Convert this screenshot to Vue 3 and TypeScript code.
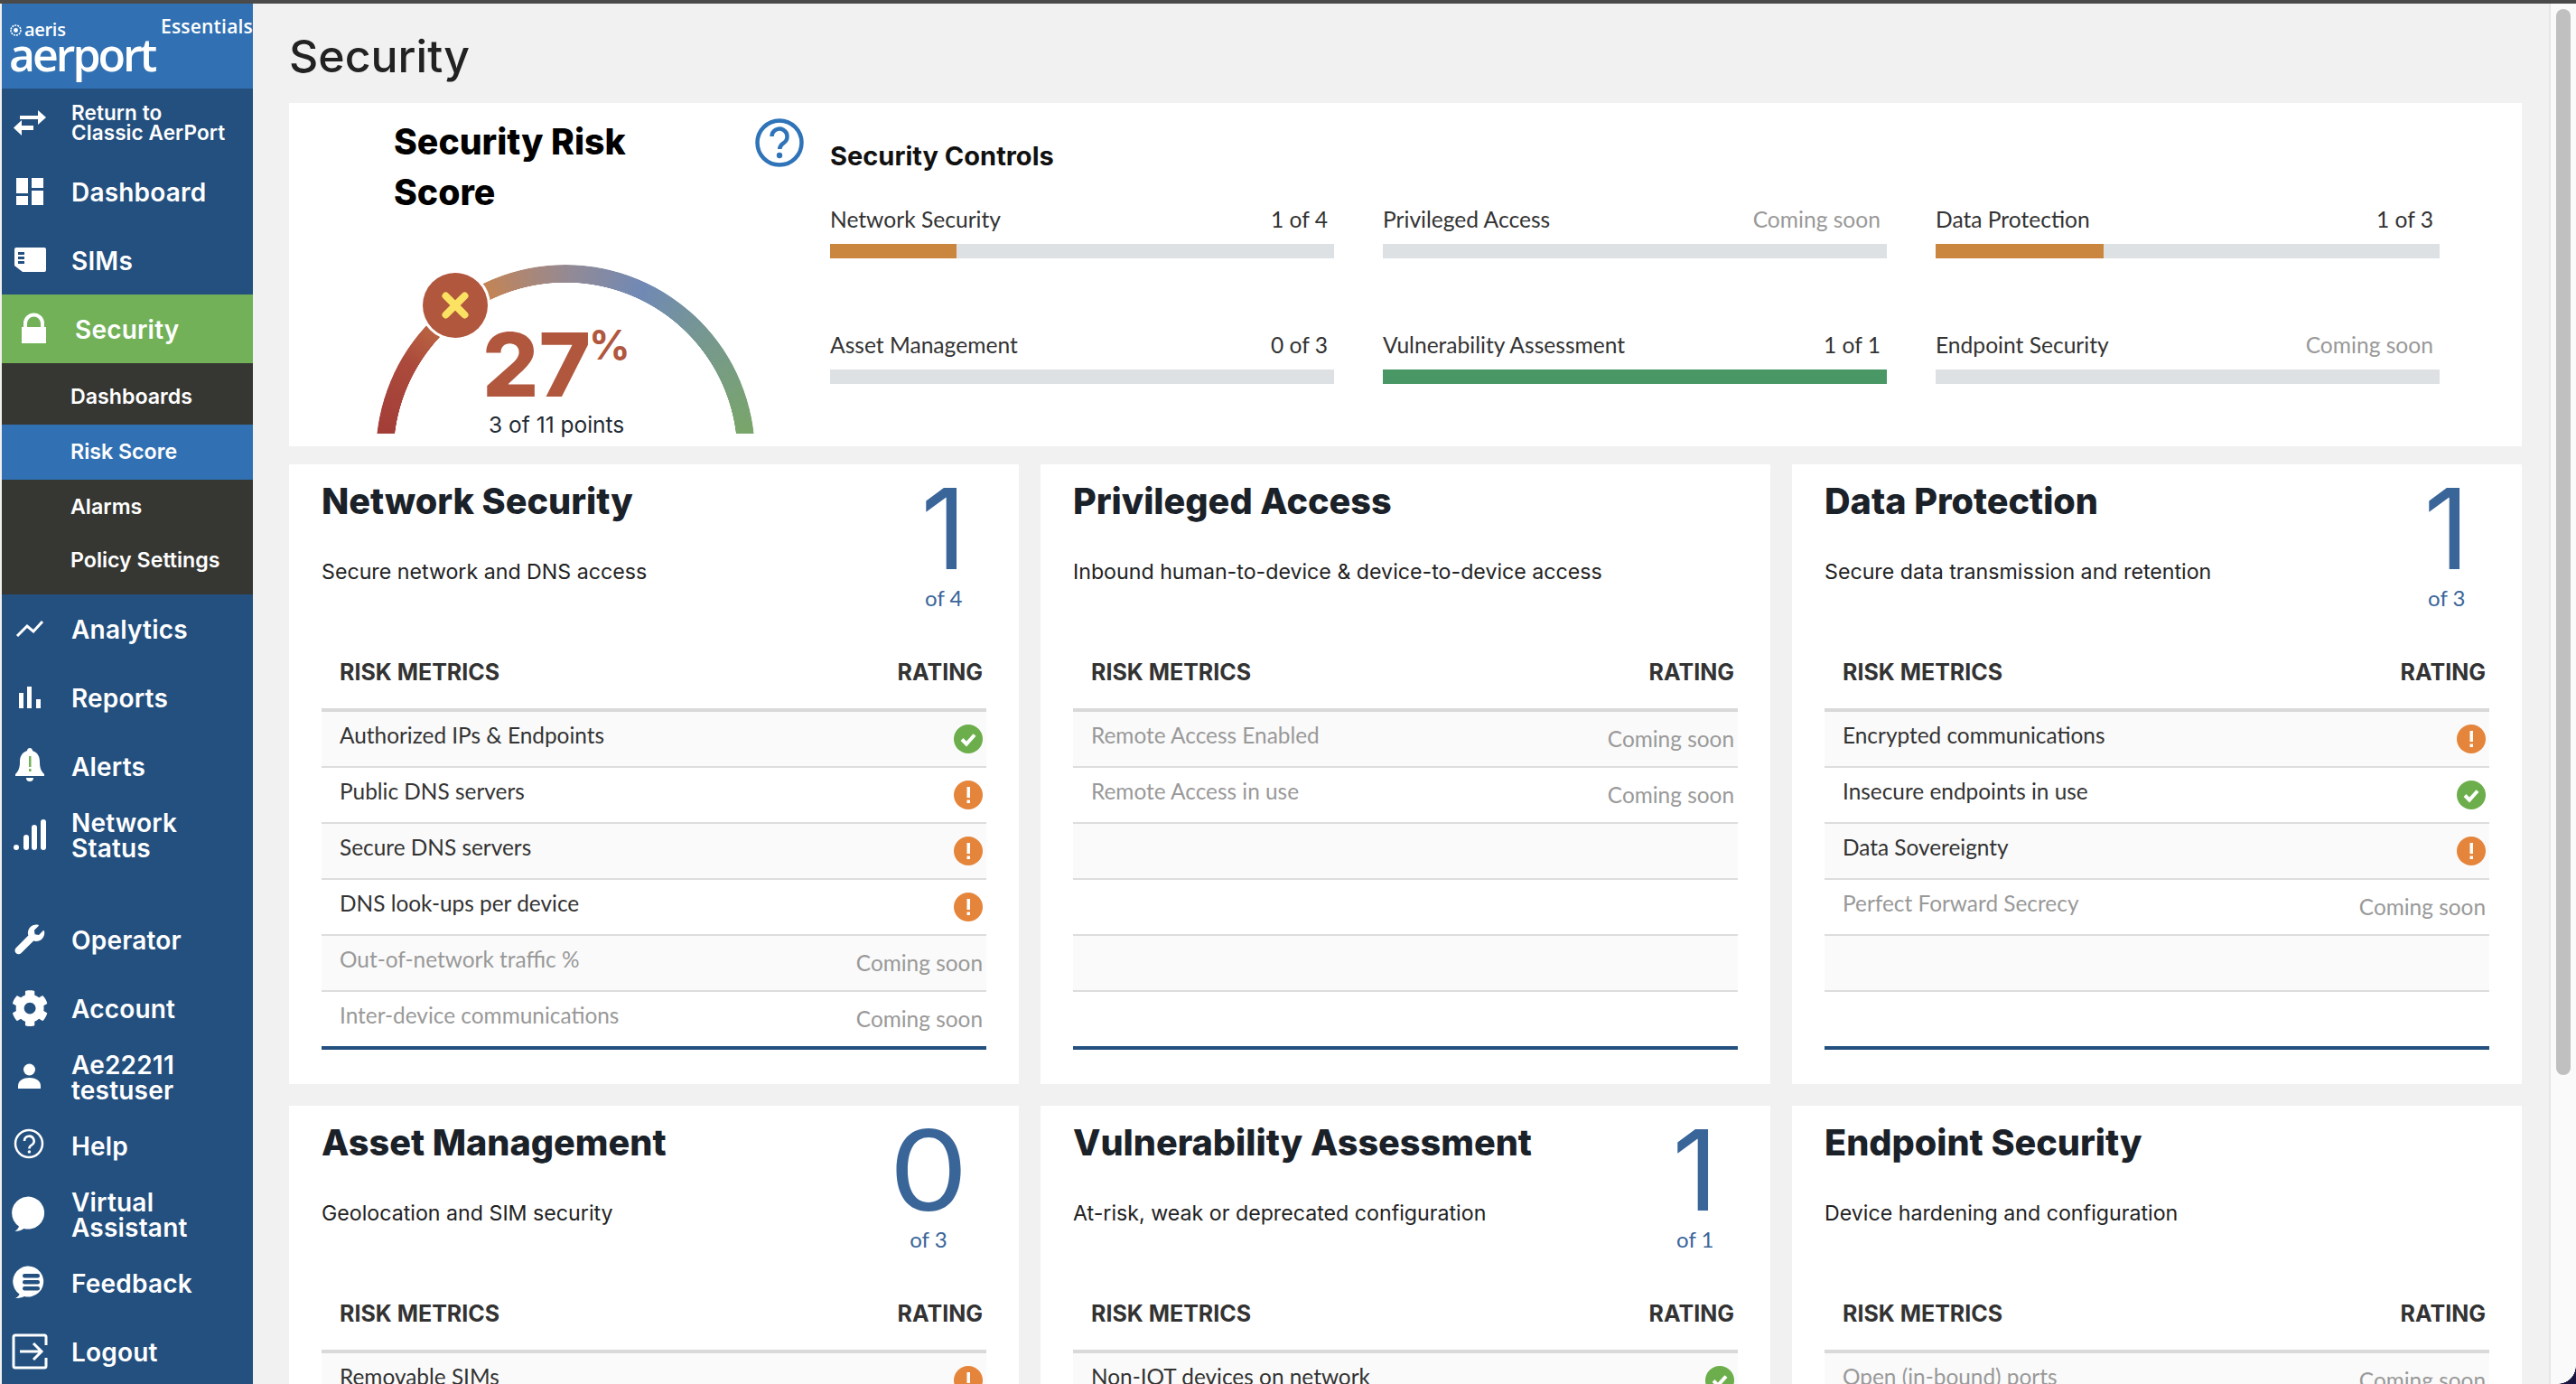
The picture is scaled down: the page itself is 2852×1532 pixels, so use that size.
<script setup lang="ts">
interface Nav { lines: string[]; icon: string; kind?: string }
const navTop: Nav[] = [
  { lines: ['Return to', 'Classic AerPort'], icon: 'swap', kind: 'small' },
  { lines: ['Dashboard'], icon: 'dash' },
  { lines: ['SIMs'], icon: 'sim' },
  { lines: ['Security'], icon: 'lock', kind: 'active' },
]
const subs = [
  { label: 'Dashboards', h: 68, shift: 6 },
  { label: 'Risk Score', h: 61, shift: -3 },
  { label: 'Alarms', h: 61, shift: -3 },
  { label: 'Policy Settings', h: 66, shift: -10 },
]
const navMid: Nav[] = [
  { lines: ['Analytics'], icon: 'trend' },
  { lines: ['Reports'], icon: 'bars' },
  { lines: ['Alerts'], icon: 'bell' },
  { lines: ['Network', 'Status'], icon: 'signal' },
]
const navLow: Nav[] = [
  { lines: ['Operator'], icon: 'wrench' },
  { lines: ['Account'], icon: 'gear' },
  { lines: ['Ae22211', 'testuser'], icon: 'user' },
  { lines: ['Help'], icon: 'help' },
  { lines: ['Virtual', 'Assistant'], icon: 'chat' },
  { lines: ['Feedback'], icon: 'feedback' },
  { lines: ['Logout'], icon: 'logout' },
]
const controls = [
  { name: 'Network Security', value: '1 of 4', pct: 25, color: '#ca853f' },
  { name: 'Privileged Access', value: 'Coming soon', pct: 0, color: '', soon: true },
  { name: 'Data Protection', value: '1 of 3', pct: 33.3, color: '#ca853f' },
  { name: 'Asset Management', value: '0 of 3', pct: 0, color: '' },
  { name: 'Vulnerability Assessment', value: '1 of 1', pct: 100, color: '#4a9766' },
  { name: 'Endpoint Security', value: 'Coming soon', pct: 0, color: '', soon: true },
]
type Status = 'ok' | 'warn' | 'soon'
interface Row { label: string; status: Status }
interface Card { title: string; sub: string; num?: string; of?: string; rows: Row[] }
const cards: Card[] = [
  { title: 'Network Security', sub: 'Secure network and DNS access', num: '1', of: 'of 4', rows: [
    { label: 'Authorized IPs & Endpoints', status: 'ok' },
    { label: 'Public DNS servers', status: 'warn' },
    { label: 'Secure DNS servers', status: 'warn' },
    { label: 'DNS look-ups per device', status: 'warn' },
    { label: 'Out-of-network traffic %', status: 'soon' },
    { label: 'Inter-device communications', status: 'soon' },
  ] },
  { title: 'Privileged Access', sub: 'Inbound human-to-device & device-to-device access', rows: [
    { label: 'Remote Access Enabled', status: 'soon' },
    { label: 'Remote Access in use', status: 'soon' },
  ] },
  { title: 'Data Protection', sub: 'Secure data transmission and retention', num: '1', of: 'of 3', rows: [
    { label: 'Encrypted communications', status: 'warn' },
    { label: 'Insecure endpoints in use', status: 'ok' },
    { label: 'Data Sovereignty', status: 'warn' },
    { label: 'Perfect Forward Secrecy', status: 'soon' },
  ] },
  { title: 'Asset Management', sub: 'Geolocation and SIM security', num: '0', of: 'of 3', rows: [
    { label: 'Removable SIMs', status: 'warn' },
  ] },
  { title: 'Vulnerability Assessment', sub: 'At-risk, weak or deprecated configuration', num: '1', of: 'of 1', rows: [
    { label: 'Non-IOT devices on network', status: 'ok' },
  ] },
  { title: 'Endpoint Security', sub: 'Device hardening and configuration', rows: [
    { label: 'Open (in-bound) ports', status: 'soon' },
  ] },
]
const fillers = (c: Card) => Math.max(0, 6 - c.rows.length)
const wrench = 'M507.73 109.1c-2.24-9.03-13.54-12.09-20.12-5.51l-74.36 74.36-67.88-11.31-11.31-67.88 74.36-74.36c6.62-6.62 3.43-17.9-5.66-20.16-47.38-11.74-99.55.91-136.58 37.93-39.64 39.64-50.55 97.1-34.05 147.2L18.74 402.76c-24.99 24.99-24.99 65.51 0 90.5 24.99 24.99 65.51 24.99 90.5 0l213.21-213.21c50.12 16.71 107.47 5.68 147.37-34.22 37.07-37.07 49.7-89.32 37.91-136.73z'
const gear = 'M487.4 315.7l-42.6-24.6c4.3-23.2 4.3-47 0-70.2l42.6-24.6c4.9-2.8 7.1-8.6 5.5-14-11.1-35.6-30-67.8-54.7-94.6-3.8-4.1-10-5.1-14.8-2.3L380.8 110c-17.9-15.4-38.5-27.3-60.8-35.1V25.8c0-5.6-3.9-10.5-9.4-11.7-36.7-8.2-74.3-7.8-109.2 0-5.5 1.2-9.4 6.1-9.4 11.7V75c-22.2 7.9-42.8 19.8-60.8 35.1L88.7 85.5c-4.9-2.8-11-1.9-14.8 2.3-24.7 26.7-43.6 58.9-54.7 94.6-1.7 5.4.6 11.2 5.5 14L67.3 221c-4.3 23.2-4.3 47 0 70.2l-42.6 24.6c-4.9 2.8-7.1 8.6-5.5 14 11.1 35.6 30 67.8 54.7 94.6 3.8 4.1 10 5.1 14.8 2.3l42.6-24.6c17.9 15.4 38.5 27.3 60.8 35.1v49.2c0 5.6 3.9 10.5 9.4 11.7 36.7 8.2 74.3 7.8 109.2 0 5.5-1.2 9.4-6.1 9.4-11.7v-49.2c22.2-7.9 42.8-19.8 60.8-35.1l42.6 24.6c4.9 2.8 11 1.9 14.8-2.3 24.7-26.7 43.6-58.9 54.7-94.6 1.5-5.5-.7-11.3-5.6-14.1zM256 336c-44.1 0-80-35.9-80-80s35.9-80 80-80 80 35.9 80 80-35.9 80-80 80z'
</script>

<template>
  <div class="root">
    <div class="topbar"></div>
    <div class="body">
      <aside class="side">
        <div class="logo">
          <div class="logo-stack">
            <div class="aeris">
              <svg width="13" height="13" viewBox="0 0 13 13"><circle cx="6.5" cy="6.5" r="5.5" fill="none" stroke="#fff" stroke-width="1.6" stroke-dasharray="2 1"/><circle cx="6.5" cy="6.5" r="2.4" fill="#fff"/></svg>
              <span>aeris</span>
            </div>
            <div class="aerport">aerport</div>
          </div>
          <div class="essentials">Essentials</div>
        </div>
        <div class="nav-group">
          <template v-for="n in navTop" :key="n.icon">
            <div class="nav" :class="n.kind">
              <span class="nav-ic"><svg width="40" height="40" viewBox="0 0 40 40" fill="#fff">
                <g v-if="n.icon==='swap'"><rect x="9" y="12" width="20" height="4"/><path d="M29 6l9 8-9 8z"/><rect x="11" y="23" width="13" height="5"/><path d="M11 17l-9 8.500 9 8.500z"/></g>
                <g v-else-if="n.icon==='dash'"><rect x="5" y="5" width="13" height="17"/><rect x="22" y="5" width="13" height="11"/><rect x="5" y="25" width="13" height="10"/><rect x="22" y="19" width="13" height="16"/></g>
                <g v-else-if="n.icon==='sim'"><path d="M3 8q0-2 2-2h31q2 0 2 2v23q0 2-2 2H12l-9-7z"/><path d="M7 11h7v3H7zM7 16h7v3H7zM7 21h7v3H7z" fill="#23507f"/></g>
                <g v-else-if="n.icon==='lock'"><rect x="7" y="18" width="27" height="18"/><path d="M11 19v-5a9.500 9.500 0 0 1 19 0v5" fill="none" stroke="#fff" stroke-width="4"/></g>
              </svg></span>
              <span class="nav-text"><span v-for="l in n.lines" :key="l">{{ l }}</span></span>
            </div>
          </template>
        </div>
        <div class="subs">
          <div v-for="s in subs" :key="s.label" class="sub" :class="{ on: s.label === 'Risk Score' }" :style="{ height: s.h + 'px' }"><span :style="{ transform: 'translateY(' + s.shift / 2 + 'px)' }">{{ s.label }}</span></div>
        </div>
        <div class="nav-group">
          <div v-for="n in navMid" :key="n.icon" class="nav">
            <span class="nav-ic"><svg width="40" height="40" viewBox="0 0 40 40" fill="#fff">
              <polyline v-if="n.icon==='trend'" points="6,28 17,17 24,23 34,12" fill="none" stroke="#fff" stroke-width="3"/>
              <g v-else-if="n.icon==='bars'"><rect x="8" y="15" width="5" height="17"/><rect x="17" y="8" width="5" height="24"/><rect x="27" y="22" width="5" height="10"/></g>
              <g v-else-if="n.icon==='bell'"><path d="M20 0c2 0 3 1.500 3 3 6 2 8 7 8 12 0 6 1 10 5 14v2H4v-2c4-4 5-8 5-14 0-5 2-10 8-12 0-1.500 1-3 3-3z"/><path d="M16 33h8a4 4 0 0 1-8 0z"/><path d="M19 9h2.500v12H19zM19 23h2.500v3H19z" fill="#72b158"/></g>
              <g v-else-if="n.icon==='signal'"><rect x="2" y="31" width="6" height="6" rx="3"/><rect x="13" y="20" width="6" height="17" rx="3"/><rect x="22" y="9" width="6" height="28" rx="3"/><rect x="32" y="3" width="6" height="34" rx="3"/></g>
            </svg></span>
            <span class="nav-text"><span v-for="l in n.lines" :key="l">{{ l }}</span></span>
          </div>
        </div>
        <div class="nav-gap"></div>
        <div class="nav-group">
          <div v-for="n in navLow" :key="n.icon" class="nav">
            <span class="nav-ic"><svg width="40" height="40" viewBox="0 0 40 40" fill="#fff">
              <path v-if="n.icon==='wrench'" :d="wrench" transform="translate(3.500 3.500) scale(0.064)"/>
              <path v-else-if="n.icon==='gear'" :d="gear" transform="translate(-0.500 -0.500) scale(0.0805)"/>
              <g v-else-if="n.icon==='user'"><circle cx="19.500" cy="12" r="6.500"/><path d="M7 33v-3c0-6 6-9 12.500-9s12.500 3 12.500 9v3z"/></g>
              <g v-else-if="n.icon==='help'"><circle cx="19" cy="18" r="15" fill="none" stroke="#fff" stroke-width="2.500"/><path d="M14 15a5.300 5.300 0 1 1 8 4.500c-2 1.200-2.600 2-2.600 4" fill="none" stroke="#fff" stroke-width="2.600"/><circle cx="19.400" cy="27" r="1.800"/></g>
              <path v-else-if="n.icon==='chat'" d="M3 39c3-2 4-4 4.500-5.500A18 18 0 1 1 13 36c-3 2-6 3-10 3z" transform="translate(0.500 0)"/>
              <g v-else-if="n.icon==='feedback'"><path d="M4 37c3-1.500 4-3 4.500-4.500A17 17 0 1 1 14 35c-3 1.500-6 2-10 2z"/><rect x="12" y="10" width="19" height="4.500" rx="2.200" fill="#23507f"/><rect x="12" y="17" width="19" height="4.500" rx="2.200" fill="#23507f"/><rect x="12" y="24" width="19" height="4.500" rx="2.200" fill="#23507f"/></g>
              <g v-else-if="n.icon==='logout'"><path d="M38 13V4q0-2-2-2H4q-2 0-2 2v32q0 2 2 2h32q2 0 2-2v-9" fill="none" stroke="#fff" stroke-width="3"/><path d="M9 20h23M24 11l9 9-9 9" fill="none" stroke="#fff" stroke-width="3"/></g>
            </svg></span>
            <span class="nav-text"><span v-for="l in n.lines" :key="l">{{ l }}</span></span>
          </div>
        </div>
      </aside>

      <main class="main">
        <h1 class="page-title">Security</h1>
        <section class="panel">
          <div class="score">
            <div class="score-head">
              <h2 class="score-title">Security Risk Score</h2>
              <svg class="score-help" width="54" height="54" viewBox="0 0 54 54"><circle cx="27" cy="27" r="24.500" fill="none" stroke="#2f74b8" stroke-width="4.500"/><path d="M18.500 20a8.500 8.500 0 1 1 13 7.300c-3.200 2-4.300 3.500-4.300 6.700" fill="none" stroke="#2f74b8" stroke-width="4.500"/><circle cx="27" cy="41" r="3.200" fill="#2f74b8"/></svg>
            </div>
            <div class="gauge">
              <div class="arc-clip"><div class="arc"></div></div>
              <div class="marker">
                <svg width="72" height="72" viewBox="0 0 72 72"><circle cx="36" cy="36" r="36" fill="#b0573e"/><path d="M25.500 25.500l21 21M46.500 25.500l-21 21" stroke="#fce262" stroke-width="8" stroke-linecap="round"/></svg>
              </div>
              <div class="pct"><span class="pct-num">27</span><span class="pct-sign">%</span></div>
              <div class="points">3 of 11 points</div>
            </div>
          </div>
          <div class="controls">
            <h3 class="controls-title">Security Controls</h3>
            <div class="controls-grid">
              <div v-for="c in controls" :key="c.name" class="ctl">
                <div class="ctl-label"><span>{{ c.name }}</span><span :class="{ soon: c.soon }">{{ c.value }}</span></div>
                <div class="track"><div class="fill" :style="{ width: c.pct + '%', background: c.color }"></div></div>
              </div>
            </div>
          </div>
        </section>

        <section class="cards">
          <article v-for="c in cards" :key="c.title" class="card">
            <div class="card-head">
              <div>
                <h2 class="card-title">{{ c.title }}</h2>
                <p class="card-sub">{{ c.sub }}</p>
              </div>
              <div v-if="c.num" class="count" :class="{ zero: c.num === '0' }">
                <div class="count-num">{{ c.num }}</div>
                <div class="count-of">{{ c.of }}</div>
              </div>
            </div>
            <div class="thead"><span>RISK METRICS</span><span>RATING</span></div>
            <div class="tbody">
              <div v-for="r in c.rows" :key="r.label" class="row">
                <span class="row-label" :class="{ soon: r.status === 'soon' }">{{ r.label }}</span>
                <span v-if="r.status === 'soon'" class="soon">Coming soon</span>
                <svg v-else-if="r.status === 'ok'" class="st" width="32" height="32" viewBox="0 0 32 32"><circle cx="16" cy="16" r="16" fill="#6cae4b"/><path d="M9 16.500l5 5 9-10" fill="none" stroke="#fff" stroke-width="4"/></svg>
                <svg v-else class="st" width="32" height="32" viewBox="0 0 32 32"><circle cx="16" cy="16" r="16" fill="#e5853b"/><rect x="14.500" y="7" width="3.500" height="12" fill="#fff"/><rect x="14.500" y="21.500" width="3.500" height="3.500" fill="#fff"/></svg>
              </div>
              <div v-for="i in fillers(c)" :key="i" class="row"></div>
            </div>
          </article>
        </section>
      </main>

      <div class="scrollbar"><div class="thumb"></div></div>
    </div>
    <div class="corner"></div>
  </div>
</template>

<style>
html, body { margin: 0; padding: 0; overflow: hidden; }
</style>

<style scoped>
.root { position: relative; width: 2852px; height: 1532px; overflow: hidden; display: flex; flex-direction: column; background: #f1f1f1; font-family: Inter, sans-serif; }
.topbar { height: 4px; background: #4a4a4a; flex: none; }
.body { flex: 1; display: flex; min-height: 0; }

.side { width: 278px; margin-left: 2px; flex: none; background: #23507f; color: #fff; display: flex; flex-direction: column; }
.logo { height: 94px; background: #3171b3; display: flex; justify-content: space-between; padding: 0 0 0 9px; box-sizing: border-box; flex: none; }
.logo-stack { display: flex; flex-direction: column; padding-top: 19px; }
.aeris { display: flex; align-items: center; gap: 3px; height: 20px; font: 600 20px/20px "Open Sans", sans-serif; letter-spacing: -0.3px; }
.aerport { font: 600 50px/44px "Open Sans", sans-serif; letter-spacing: -3px; margin-top: -5px; margin-left: -1px; }
.essentials { font: 600 21px/24px "Open Sans", sans-serif; padding-top: 13px; letter-spacing: 0.2px; white-space: nowrap; }
.nav-group { display: flex; flex-direction: column; flex: none; }
.nav-gap { height: 40px; flex: none; }
.nav { height: 76px; display: flex; align-items: center; flex: none; }
.nav-ic { width: 62px; display: flex; align-items: center; justify-content: center; flex: none; }
.nav-text { margin-left: 15px; padding-top: 2px; display: flex; flex-direction: column; font-weight: 600; font-size: 28px; line-height: 28px; letter-spacing: 0.2px; }
.nav.small .nav-text { font-size: 22.500px; line-height: 22px; letter-spacing: 0.1px; padding-top: 0; }
.nav.active { background: #72b158; padding-left: 4px; }
.subs { flex: none; background: #363733; }
.sub { padding-left: 76px; display: flex; align-items: center; font-weight: 600; font-size: 23.200px; }
.sub.on { background: #3171b3; }

.main { flex: 1; min-width: 0; padding: 0 30px 0 40px; overflow: hidden; }
.page-title { margin: 0; height: 110px; box-sizing: border-box; padding-top: 29px; font-weight: 500; font-size: 50px; line-height: 58px; color: #222; letter-spacing: 0; }

.panel { background: #fff; height: 380px; display: flex; }
.score { width: 599px; flex: none; padding-top: 15px; box-sizing: border-box; }
.score-head { display: flex; justify-content: space-between; align-items: flex-start; padding-left: 116px; padding-right: 29px; height: 112px; }
.score-title { margin: 0; width: 320px; font-weight: 800; font-size: 39.200px; line-height: 56px; color: #000; }
.score-help { margin-top: 2px; }
.gauge { position: relative; margin: 52px 0 0 96px; width: 420px; height: 187px; }
.arc-clip { height: 187px; overflow: hidden; }
.arc { width: 420px; height: 420px; border-radius: 50%; background: conic-gradient(from 270deg, #a03a36 0deg, #ab4a3c 30deg, #cb8348 60deg, #b08670 75deg, #928a96 92deg, #7089b5 115deg, #76988f 140deg, #7aa862 180deg); -webkit-mask: radial-gradient(closest-side, transparent calc(100% - 20px), #000 calc(100% - 19.500px)); mask: radial-gradient(closest-side, transparent calc(100% - 20px), #000 calc(100% - 19.500px)); }
.marker { position: absolute; left: 49px; top: 6px; width: 72px; height: 72px; border: 3px solid #fff; border-radius: 50%; background: #fff; }
.marker svg { display: block; }
.pct { position: absolute; left: 118px; top: 62px; color: #b0573e; display: flex; align-items: flex-start; }
.pct-num { font-weight: 800; font-size: 98px; line-height: 98px; letter-spacing: 0; }
.pct-sign { font-weight: 700; font-size: 45px; line-height: 44px; margin-left: -2px; margin-top: 5px; }
.points { position: absolute; left: 125px; top: 161px; font-size: 24.500px; line-height: 32px; color: #1f2a33; font-weight: 400; white-space: nowrap; }

.controls { flex: 1; padding-top: 41px; }
.controls-title { margin: 0; font-weight: 700; font-size: 29px; line-height: 36px; color: #111; }
.controls-grid { margin-top: 36px; display: grid; grid-template-columns: repeat(3, 558px); column-gap: 54px; row-gap: 80px; }
.ctl-label { height: 32px; margin-bottom: 11px; padding-right: 7px; display: flex; justify-content: space-between; align-items: center; font: 400 24.600px/32px Lato, sans-serif; color: #333; }
.track { height: 16px; background: #dee1e4; }
.fill { height: 100%; }
.soon { color: #999; }

.cards { margin-top: 20px; display: grid; grid-template-columns: repeat(3, 808px); column-gap: 24px; row-gap: 24px; }
.card { background: #fff; height: 686px; padding: 16px 36px 0; box-sizing: border-box; }
.card-head { height: 197px; display: flex; justify-content: space-between; }
.card-title { margin: 0; font-weight: 800; font-size: 39.600px; line-height: 50px; color: #1b2128; }
.card-sub { margin: 38px 0 0; font-size: 23.200px; line-height: 30px; color: #222; font-weight: 400; }
.count { display: flex; flex-direction: column; align-items: center; padding-top: 5px; padding-right: 22px; color: #3a6599; }
.count.zero { padding-right: 25px; }
.count.zero .count-num { transform: scaleX(1.12); }
.count-num { font-weight: 400; font-size: 124px; line-height: 100px; }
.count-of { margin-top: 12px; font: 400 24px/30px Lato, sans-serif; }
.thead { height: 57px; padding: 0 4px 23px 20px; box-sizing: border-box; display: flex; justify-content: space-between; align-items: center; font-weight: 700; font-size: 25px; color: #333; }
.tbody { border-top: 4px solid #d9d9d9; border-bottom: 4px solid #23507f; }
.row { height: 62px; box-sizing: border-box; border-bottom: 2px solid #ddd; padding: 0 4px 0 20px; display: flex; justify-content: space-between; align-items: center; font: 400 24.400px/30px Lato, sans-serif; color: #333; }
.row:nth-child(odd) { background: #fafafa; }
.row:last-child { height: 60px; border-bottom: 0; }
.row-label { padding-bottom: 9px; }
.st { flex: none; }

.scrollbar { width: 30px; flex: none; box-sizing: border-box; background: #fafafa; border-left: 2px solid #e6e6e6; padding: 6px 0 0 6px; }
.thumb { width: 16px; height: 1180px; border-radius: 8px; background: #c0c0c0; }
.corner { position: absolute; right: 0; bottom: 0; width: 20px; height: 20px; background: radial-gradient(circle at 0 0, transparent 19.500px, #1a1440 20px); }
</style>
